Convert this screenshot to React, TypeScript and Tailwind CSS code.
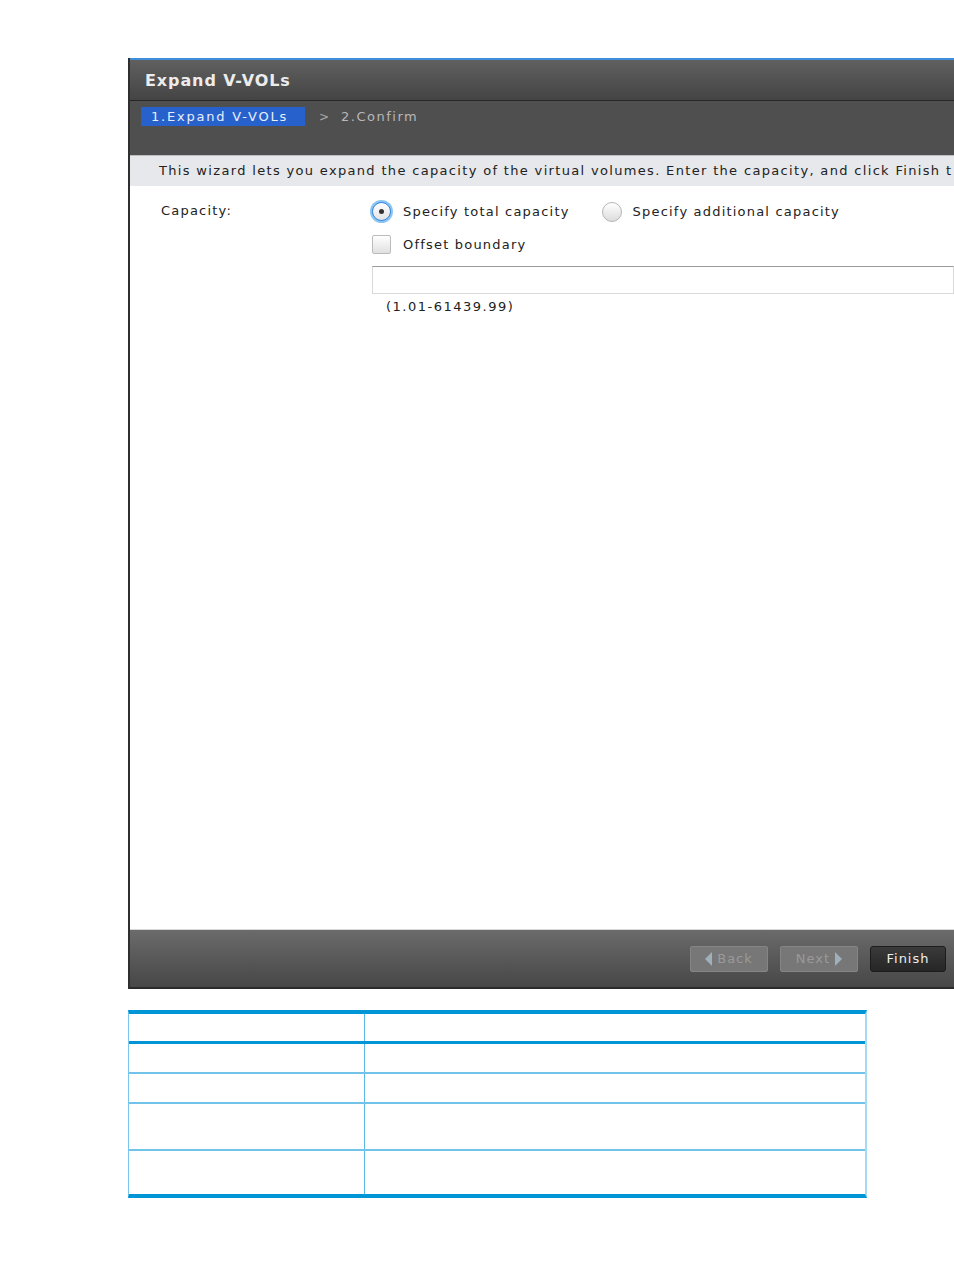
import React from 'react'

const font = { fontFamily: '"DejaVu Sans", Verdana, sans-serif' }

function Radio({ checked }: { checked?: boolean }) {
  if (checked) {
    return (
      <span className="flex h-[23px] w-[23px] items-center justify-center rounded-full bg-[#8cc4f2]">
        <span className="flex h-[19px] w-[19px] items-center justify-center rounded-full border border-[#2f86de] bg-gradient-to-b from-white to-[#e4e4e4]">
          <span className="h-[5px] w-[5px] rounded-full bg-[#333]" />
        </span>
      </span>
    )
  }
  return (
    <span className="flex h-[23px] w-[23px] items-center justify-center">
      <span className="h-[20px] w-[20px] rounded-full border border-[#b5b5b5] bg-gradient-to-b from-white to-[#dcdcdc]" />
    </span>
  )
}

function NavButton({ label, dir }: { label: string; dir: 'left' | 'right' }) {
  const arrow = (
    <svg width="7" height="14" viewBox="0 0 7 14">
      {dir === 'left' ? (
        <path d="M7 0 L0 7 L7 14 Z" fill="#9fb0ba" />
      ) : (
        <path d="M0 0 L7 7 L0 14 Z" fill="#9fb0ba" />
      )}
    </svg>
  )
  return (
    <div className="flex h-[26px] w-[78px] items-center justify-center gap-[5px] rounded-[2px] border border-[#858585] bg-[#777] text-[13px] tracking-[1px] text-[#9a9a9a]">
      {dir === 'left' && arrow}
      <span>{label}</span>
      {dir === 'right' && arrow}
    </div>
  )
}

export default function App() {
  return (
    <div className="h-[1270px] w-[954px] overflow-hidden bg-white" style={font}>
      <div className="pl-[128px] pt-[58px]">
        {/* wizard panel */}
        <div className="w-[826px] border-l-2 border-[#2f2f2f]">
          <div className="h-[2px] bg-[#3d8fdc]" />
          <div className="flex h-[40px] items-center bg-gradient-to-b from-[#606060] to-[#444] pl-[15px] pt-[2px]">
            <span className="text-[16px] font-bold tracking-[0.9px] text-[#ececec]">Expand V-VOLs</span>
          </div>
          <div className="h-[1px] bg-[#262626]" />
          <div className="h-[54px] bg-[#4f4f4f] pl-[11px] pt-[6px]">
            <div className="flex items-center">
              <div className="flex h-[19px] w-[164px] items-center bg-[#2762cc] pl-[10px] text-[13px] tracking-[1.8px] text-[#e8eefc]">
                1.Expand V-VOLs
              </div>
              <span className="ml-[14px] text-[12px] text-[#aaa]">&gt;</span>
              <span className="ml-[12px] text-[13px] tracking-[1.5px] text-[#b8b8b8]">2.Confirm</span>
            </div>
          </div>
          <div className="flex h-[31px] items-center overflow-hidden whitespace-nowrap border-t border-[#bdbdbd] bg-[#e7e8eb] pl-[29px] text-[13px] tracking-[1.33px] text-[#222]">
            This wizard lets you expand the capacity of the virtual volumes. Enter the capacity, and click Finish t
          </div>
          {/* form */}
          <div className="h-[743px] bg-white pt-[14px] text-[13px] tracking-[1.2px] text-[#222]">
            <div className="flex">
              <div className="w-[240px] pl-[31px] pt-[1px]">Capacity:</div>
              <div className="flex-1">
                <div className="flex items-center">
                  <Radio checked />
                  <span className="ml-[10px]">Specify total capacity</span>
                  <span className="ml-[31px]">
                    <Radio />
                  </span>
                  <span className="ml-[9px]">Specify additional capacity</span>
                </div>
                <div className="mt-[12px] flex items-center pl-[2px]">
                  <span className="h-[19px] w-[19px] rounded-[2px] border border-[#bbb] bg-gradient-to-b from-white to-[#e0e0e0]" />
                  <span className="ml-[12px]">Offset boundary</span>
                </div>
                <div className="ml-[2px] mt-[11px] h-[28px] border border-[#d9d9d9] border-t-[#999] bg-white" />
                <div className="ml-[16px] mt-[3px] tracking-[1.5px]">(1.01-61439.99)</div>
              </div>
            </div>
          </div>
          {/* footer */}
          <div className="h-[1px] bg-[#d8d8d8]" />
          <div className="flex h-[57px] items-center justify-end gap-[13px] bg-gradient-to-b from-[#6b6b6b] to-[#474747] pr-[8px]">
            <NavButton label="Back" dir="left" />
            <div className="-ml-[1px]">
              <NavButton label="Next" dir="right" />
            </div>
            <div className="-ml-[1px] flex h-[26px] w-[76px] items-center justify-center rounded-[3px] border border-[#1c1c1c] bg-gradient-to-b from-[#3a3a3a] to-[#262626] text-[13px] tracking-[1px] text-[#eee]">
              Finish
            </div>
          </div>
          <div className="h-[2px] bg-[#2a2a2a]" />
        </div>

        {/* table */}
        <div className="mt-[21px] w-[739px] border-b-4 border-l border-r-2 border-t-4 border-b-[#0096d6] border-l-[#7cc7ee] border-r-[#a6daf2] border-t-[#0096d6]">
          <div className="grid grid-cols-[236px_1fr]">
            <div className="h-[27px] border-r border-[#5bb8e6]" />
            <div className="h-[27px]" />
          </div>
          <div className="grid grid-cols-[236px_1fr] border-t-[3px] border-[#0096d6]">
            <div className="h-[28px] border-r border-[#5bb8e6]" />
            <div className="h-[28px]" />
          </div>
          <div className="grid grid-cols-[236px_1fr] border-t-2 border-[#72c3ea]">
            <div className="h-[28px] border-r border-[#5bb8e6]" />
            <div className="h-[28px]" />
          </div>
          <div className="grid grid-cols-[236px_1fr] border-t-2 border-[#72c3ea]">
            <div className="h-[45px] border-r border-[#5bb8e6]" />
            <div className="h-[45px]" />
          </div>
          <div className="grid grid-cols-[236px_1fr] border-t-2 border-[#72c3ea]">
            <div className="h-[43px] border-r border-[#5bb8e6]" />
            <div className="h-[43px]" />
          </div>
        </div>
      </div>
    </div>
  )
}
